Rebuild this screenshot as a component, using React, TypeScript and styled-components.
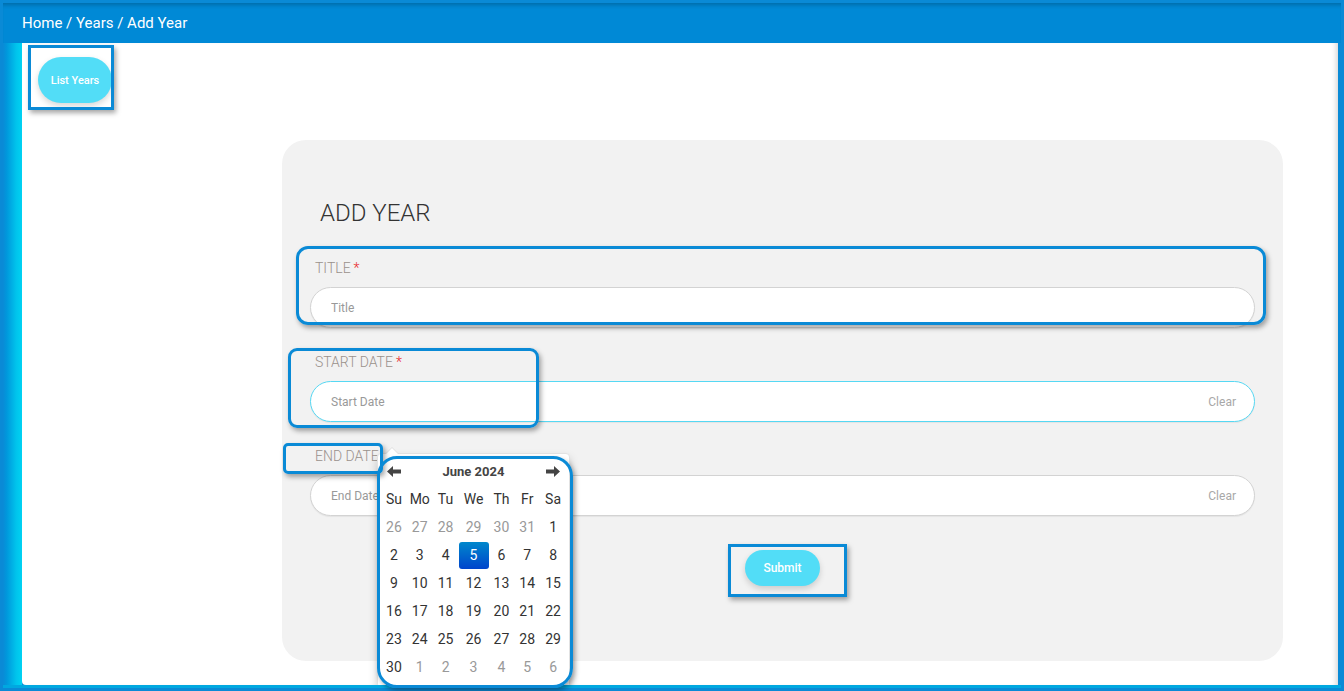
import styled, { createGlobalStyle } from 'styled-components';

const GlobalStyle = createGlobalStyle`
  html, body {
    margin: 0;
    padding: 0;
    overflow: hidden;
    background: #0a8ad6;
  }
  * {
    box-sizing: border-box;
  }
`;

const Shell = styled.div`
  position: relative;
  width: 1344px;
  height: 691px;
  padding: 3px;
  display: flex;
  flex-direction: column;
  background: #0a8ad6;
  font-family: Roboto, 'Liberation Sans', sans-serif;
  overflow: hidden;
`;

const Header = styled.header`
  height: 40px;
  flex: none;
  display: flex;
  align-items: center;
  padding-left: 19px;
  background: #0089d6;
  color: #ffffff;
  font-size: 15px;
  box-shadow: inset 0 5px 4px -3px rgba(0, 0, 0, 0.22);
`;

const Body = styled.div`
  flex: 1;
  display: flex;
  min-height: 0;
`;

const SideEdge = styled.div`
  width: 19px;
  flex: none;
  background: linear-gradient(to right, #0a8ad6 0%, #0098dc 20%, #00c4ec 70%, #00d2f2 100%);
`;

const RightEdge = styled.div`
  width: 3px;
  flex: none;
  background: #0a8ad6;
`;

const BottomEdge = styled.div`
  height: 3px;
  flex: none;
  background: #00a8e0;
`;

const Panel = styled.main`
  flex: 1;
  background: #ffffff;
  border-bottom-left-radius: 4px;
  overflow: hidden;
  padding: 14px 0 0 16px;
  box-shadow: inset -5px 0 5px -3px rgba(0, 0, 0, 0.16);
`;

const PillButton = styled.button<{ $w: number; $h: number; $size: number }>`
  display: flex;
  align-items: center;
  justify-content: center;
  width: ${(p) => p.$w}px;
  height: ${(p) => p.$h}px;
  border: none;
  border-radius: ${(p) => p.$h / 2}px;
  background: #52ddf7;
  color: #ffffff;
  font-family: Roboto, 'Liberation Sans', sans-serif;
  font-size: ${(p) => p.$size}px;
  font-weight: 500;
  padding: 0;
  box-shadow: 0 3px 6px rgba(0, 0, 0, 0.16);
`;

const Card = styled.section`
  position: relative;
  margin: 37px 0 0 244px;
  width: 1001px;
  height: 521px;
  padding: 0 28px;
  background: #f2f2f2;
  border-radius: 24px;
  display: flex;
  flex-direction: column;
`;

const Heading = styled.h1`
  margin: 59px 0 33px 10px;
  font-size: 24px;
  line-height: 28px;
  font-weight: 300;
  color: #333333;
`;

const Field = styled.div`
  margin-bottom: 26px;
`;

const Label = styled.label`
  display: block;
  padding-left: 5px;
  margin-bottom: 11px;
  font-size: 14px;
  line-height: 16px;
  font-weight: 300;
  color: #9a918c;
  text-transform: uppercase;
`;

const Required = styled.span`
  color: #e8262b;
  margin-left: 3px;
`;

const InputShell = styled.div<{ $focused?: boolean }>`
  height: 41px;
  display: flex;
  align-items: center;
  padding: 0 18px 0 20px;
  background: #ffffff;
  border-radius: 21px;
  border: 1px solid ${(p) => (p.$focused ? '#56d8f3' : '#d3d3d3')};
  box-shadow: 0 1px 1px rgba(0, 0, 0, 0.06);
`;

const TextInput = styled.input`
  flex: 1;
  border: none;
  outline: none;
  background: transparent;
  font-family: Roboto, 'Liberation Sans', sans-serif;
  font-size: 12px;
  color: #333333;
  padding: 0;
  &::placeholder {
    color: #999999;
  }
`;

const Clear = styled.span`
  font-size: 12px;
  color: #a8a8a8;
`;

const SubmitRow = styled.div`
  display: flex;
  justify-content: center;
  margin-top: 8px;
`;

const Calendar = styled.div`
  position: absolute;
  left: 95px;
  top: 313px;
  width: 193px;
  padding: 3px 3px 6px;
  background: #ffffff;
  border: 1px solid #e2e2e2;
  border-radius: 4px;
  box-shadow: 0 5px 10px rgba(0, 0, 0, 0.2);
  font-family: Roboto, 'Liberation Sans', sans-serif;
  color: #333333;

  &::before {
    content: '';
    position: absolute;
    left: 7px;
    top: -7px;
    border-left: 7px solid transparent;
    border-right: 7px solid transparent;
    border-bottom: 7px solid #dddddd;
  }
  &::after {
    content: '';
    position: absolute;
    left: 8px;
    top: -6px;
    border-left: 6px solid transparent;
    border-right: 6px solid transparent;
    border-bottom: 6px solid #ffffff;
  }
`;

const CalGrid = styled.div`
  display: grid;
  grid-template-columns: repeat(7, 1fr);
  grid-auto-rows: 28px;
`;

const NavCell = styled.div`
  display: flex;
  align-items: center;
  justify-content: center;
`;

const MonthTitle = styled.div`
  grid-column: span 5;
  display: flex;
  align-items: center;
  justify-content: center;
  font-size: 13px;
  font-weight: 700;
  color: #444444;
`;

const DayCell = styled.div<{ $muted?: boolean }>`
  display: flex;
  align-items: center;
  justify-content: center;
  font-size: 14px;
  color: ${(p) => (p.$muted ? '#999999' : '#333333')};
`;

const Selected = styled.span`
  display: flex;
  align-items: center;
  justify-content: center;
  width: 30px;
  height: 27px;
  border-radius: 3px;
  background: linear-gradient(to bottom, #0088cc, #0044cc);
  color: #ffffff;
`;

const Annotation = styled.div<{ $x: number; $y: number; $w: number; $h: number; $r: number }>`
  position: absolute;
  left: ${(p) => p.$x}px;
  top: ${(p) => p.$y}px;
  width: ${(p) => p.$w}px;
  height: ${(p) => p.$h}px;
  border: 3px solid #0a8ad6;
  border-radius: ${(p) => p.$r}px;
  box-shadow: 2px 3px 5px rgba(0, 0, 0, 0.35);
  pointer-events: none;
`;

const Arrow = ({ dir }: { dir: 'left' | 'right' }) => (
  <svg width="14" height="11" viewBox="0 0 14 11">
    <path
      d={dir === 'left' ? 'M0 5.5 L6 0 L6 3.5 L14 3.5 L14 7.5 L6 7.5 L6 11 Z' : 'M14 5.5 L8 0 L8 3.5 L0 3.5 L0 7.5 L8 7.5 L8 11 Z'}
      fill="#444444"
    />
  </svg>
);

const weekDays = ['Su', 'Mo', 'Tu', 'We', 'Th', 'Fr', 'Sa'];

const days: { n: number; muted?: boolean }[] = [
  ...[26, 27, 28, 29, 30, 31].map((n) => ({ n, muted: true })),
  ...Array.from({ length: 30 }, (_, i) => ({ n: i + 1 })),
  ...[1, 2, 3, 4, 5, 6].map((n) => ({ n, muted: true })),
];

const annotations = [
  { x: 28, y: 45, w: 86, h: 65, r: 0 },
  { x: 296, y: 246, w: 970, h: 79, r: 12 },
  { x: 288, y: 348, w: 251, h: 80, r: 9 },
  { x: 283, y: 443, w: 100, h: 31, r: 5 },
  { x: 377, y: 456, w: 196, h: 232, r: 20 },
  { x: 728, y: 544, w: 119, h: 53, r: 0 },
];

const App = () => {
  return (
    <>
      <GlobalStyle />
      <Shell>
        <Header>Home / Years / Add Year</Header>
        <Body>
          <SideEdge />
          <Panel>
            <PillButton $w={74} $h={46} $size={11}>
              List Years
            </PillButton>
            <Card>
              <Heading>ADD YEAR</Heading>
              <Field>
                <Label>
                  Title<Required>*</Required>
                </Label>
                <InputShell>
                  <TextInput placeholder="Title" />
                </InputShell>
              </Field>
              <Field>
                <Label>
                  Start Date<Required>*</Required>
                </Label>
                <InputShell $focused>
                  <TextInput placeholder="Start Date" />
                  <Clear>Clear</Clear>
                </InputShell>
              </Field>
              <Field>
                <Label>End Date</Label>
                <InputShell>
                  <TextInput placeholder="End Date" />
                  <Clear>Clear</Clear>
                </InputShell>
              </Field>
              <SubmitRow>
                <PillButton $w={75} $h={36} $size={12}>
                  Submit
                </PillButton>
              </SubmitRow>
              <Calendar>
                <CalGrid>
                  <NavCell>
                    <Arrow dir="left" />
                  </NavCell>
                  <MonthTitle>June 2024</MonthTitle>
                  <NavCell>
                    <Arrow dir="right" />
                  </NavCell>
                  {weekDays.map((d) => (
                    <DayCell key={d}>{d}</DayCell>
                  ))}
                  {days.map((d, i) => (
                    <DayCell key={i} $muted={d.muted}>
                      {!d.muted && d.n === 5 ? <Selected>5</Selected> : d.n}
                    </DayCell>
                  ))}
                </CalGrid>
              </Calendar>
            </Card>
          </Panel>
          <RightEdge />
        </Body>
        <BottomEdge />
        {annotations.map((a, i) => (
          <Annotation key={i} $x={a.x} $y={a.y} $w={a.w} $h={a.h} $r={a.r} />
        ))}
      </Shell>
    </>
  );
};

export default App;
